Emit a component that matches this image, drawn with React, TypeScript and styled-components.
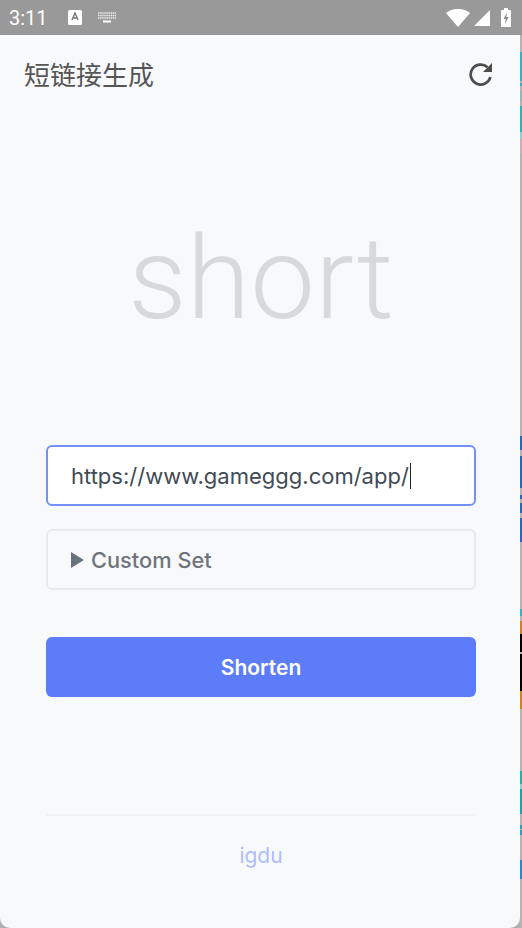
import * as React from 'react';
import styled, { createGlobalStyle } from 'styled-components';

const GlobalStyle = createGlobalStyle`
  html, body {
    margin: 0;
    padding: 0;
    background: #b0b0b0;
  }
  * {
    box-sizing: border-box;
  }
`

const SShell = styled.div`
  width: 522px;
  height: 928px;
  display: flex;
  overflow: hidden;
  font-family: Roboto, "Noto Sans CJK SC", sans-serif;
`

const SMain = styled.div`
  width: 520px;
  display: flex;
  flex-direction: column;
`

const SStatusBar = styled.div`
  height: 35px;
  flex: none;
  background: #999999;
  display: flex;
  align-items: center;
  padding: 0 9px;
  color: #ffffff;
`

const STime = styled.span`
  font-size: 20px;
  width: 59px;
`

const SStatusRight = styled.div`
  margin-left: auto;
  display: flex;
  align-items: center;
  gap: 4px;
`

const SBattery = styled.svg`
  margin-left: 7px;
`

const SBoardIcon = styled.svg`
  margin-left: 16px;
`

const SPage = styled.div`
  flex: 1;
  background: #f8f9fb;
  border-radius: 0 0 10px 10px;
  display: flex;
  flex-direction: column;
`

const SHeader = styled.div`
  height: 80px;
  flex: none;
  display: flex;
  align-items: center;
  justify-content: space-between;
  padding: 0 26px 3px 24px;
`

const STitle = styled.div`
  font-size: 26px;
  color: #555555;
`

const SContent = styled.div`
  flex: 1;
  display: flex;
  flex-direction: column;
  padding: 0 44px 0 46px;
  font-family: Inter, sans-serif;
`

const SLogo = styled.div`
  margin-top: 96px;
  height: 136px;
  font-family: Roboto, sans-serif;
  font-size: 115.5px;
  line-height: 136px;
  font-weight: 300;
  text-align: center;
  color: #d8d9db;
`

const SInput = styled.div`
  margin-top: 98px;
  height: 61px;
  background: #ffffff;
  border: 2px solid #7490fb;
  border-radius: 6px;
  display: flex;
  align-items: center;
  padding: 0 23px;
  font-size: 22px;
  color: #414a55;
`

const SCaret = styled.span`
  width: 1px;
  height: 26px;
  background: #222222;
  margin-left: 1px;
`

const SDetails = styled.div`
  margin-top: 23px;
  height: 61px;
  border: 2px solid #e8e9eb;
  border-radius: 6px;
  display: flex;
  align-items: center;
  gap: 7px;
  padding: 0 23px;
  font-size: 21.8px;
  font-weight: 500;
  color: #6f747c;
`

const SButton = styled.button`
  margin-top: 47px;
  height: 60px;
  flex: none;
  border: none;
  border-radius: 6px;
  background: #5c7cfa;
  color: #ffffff;
  font-family: inherit;
  font-size: 21px;
  font-weight: 600;
`

const SFooter = styled.div`
  margin-top: 117px;
  border-top: 2px solid #f0f1f3;
  padding-top: 27px;
  text-align: center;
  font-size: 21px;
  color: #aebefc;
`

const SStrip = styled.div`
  width: 2px;
  display: flex;
  flex-direction: column;
`

const SStripPart = styled.div<{ h: number; c: string }>`
  height: ${({ h }) => h}px;
  background: ${({ c }) => c};
`

const GREY = '#b4b4b4'
const TEAL = '#2fb4c4'
const BLUE = '#2368c4'
const ORANGE = '#c9851f'

const stripParts: [number, string][] = [
  [35, '#999999'],
  [17, GREY],
  [29, TEAL],
  [2, GREY],
  [3, TEAL],
  [5, GREY],
  [10, '#8fb8b8'],
  [5, GREY],
  [26, '#2bb4b4'],
  [7, '#8fd0d0'],
  [14, '#c9b0b8'],
  [283, GREY],
  [14, BLUE],
  [6, GREY],
  [32, BLUE],
  [7, GREY],
  [4, BLUE],
  [4, GREY],
  [10, BLUE],
  [5, GREY],
  [25, BLUE],
  [67, GREY],
  [7, TEAL],
  [5, GREY],
  [13, ORANGE],
  [18, '#000000'],
  [2, GREY],
  [37, '#000000'],
  [18, ORANGE],
  [62, GREY],
  [13, '#1fb5a0'],
  [5, '#8fd0c8'],
  [25, '#12a7a8'],
  [11, GREY],
  [4, '#2aa0c0'],
  [1, GREY],
  [5, '#2aa0c0'],
  [25, GREY],
  [19, '#1d8fc5'],
  [49, GREY],
]

const App = () => {
  return (
    <SShell>
      <GlobalStyle />
      <SMain>
        <SStatusBar>
          <STime>3:11</STime>
          <svg width="14" height="15" viewBox="0 0 14 15">
            <rect x="0" y="0" width="14" height="15" rx="1.5" fill="#fff" />
            <path d="M4 10 L7 3 L10 10 M5 8 H9" stroke="#777" strokeWidth="1.4" fill="none" />
          </svg>
          <SBoardIcon width="18" height="11" viewBox="0 0 18 11">
            <path d="M0 1h18M0 3.5h18M0 6h18" stroke="#fff" strokeWidth="1.4" strokeDasharray="1.5 0.6" opacity="0.8" />
            <path d="M5 8.5h8v2H5z" fill="#fff" />
          </SBoardIcon>
          <SStatusRight>
            <svg width="24" height="18" viewBox="0 0 24 18">
              <path d="M0 4 C7 -1.5 17 -1.5 24 4 L12 18 Z" fill="#fff" />
            </svg>
            <svg width="16" height="16" viewBox="0 0 16 16">
              <path d="M16 0 V16 H0 Z" fill="#fff" />
            </svg>
            <SBattery width="10" height="19" viewBox="0 0 10 19">
              <path d="M3 0h4v2h2a1 1 0 0 1 1 1v15a1 1 0 0 1-1 1H1a1 1 0 0 1-1-1V3a1 1 0 0 1 1-1h2z" fill="#fff" />
              <path d="M6 4.5 L2.5 11 H4.7 L4 16 L7.5 9 H5.3 Z" fill="#888" />
            </SBattery>
          </SStatusRight>
        </SStatusBar>
        <SPage>
          <SHeader>
            <STitle>短链接生成</STitle>
            <svg width="26" height="26" viewBox="0 0 26 26">
              <path d="M19.5 6.2A10 10 0 1 0 22.4 16" stroke="#4d4d4d" strokeWidth="2.7" fill="none" />
              <path d="M24 2v9h-9z" fill="#4d4d4d" />
            </svg>
          </SHeader>
          <SContent>
            <SLogo>short</SLogo>
            <SInput>
              https://www.gameggg.com/app/
              <SCaret />
            </SInput>
            <SDetails>
              <svg width="13" height="16" viewBox="0 0 13 16">
                <path d="M0 0 L13 8 L0 16 Z" fill="#6b7280" />
              </svg>
              Custom Set
            </SDetails>
            <SButton>Shorten</SButton>
            <SFooter>igdu</SFooter>
          </SContent>
        </SPage>
      </SMain>
      <SStrip>
        {stripParts.map(([h, c], i) => (
          <SStripPart key={i} h={h} c={c} />
        ))}
      </SStrip>
    </SShell>
  );
}

export default App;
